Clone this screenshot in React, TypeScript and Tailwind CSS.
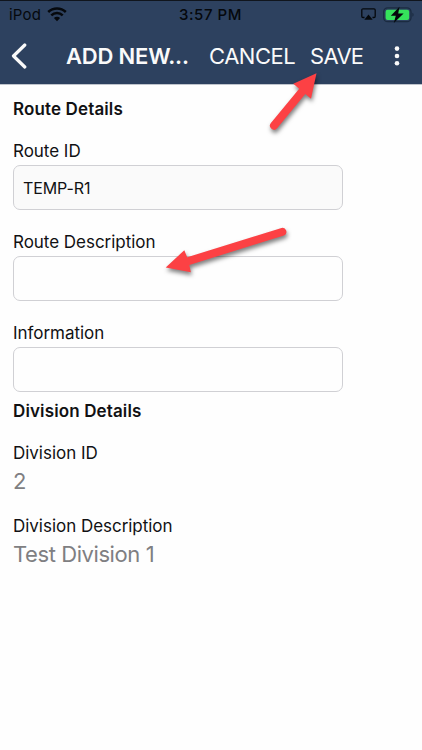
import type { ReactNode } from "react";

function WifiIcon() {
  return (
    <svg width="20" height="15" viewBox="0 0 20 15" fill="none" stroke="#05080c" strokeWidth="2.5">
      <path d="M1.200 5a12.600 12.600 0 0 1 17.600 0" />
      <path d="M4.300 8.400a8.100 8.100 0 0 1 11.400 0" />
      <path d="M10 14.200 6.900 11.100a4.400 4.400 0 0 1 6.200 0Z" fill="#05080c" stroke="none" />
    </svg>
  );
}

function AirplayIcon() {
  return (
    <svg width="15" height="13" viewBox="0 0 15 13" fill="none">
      <path d="M3.500 9.500H2A1.200 1.200 0 0 1 .8 8.300V2A1.200 1.200 0 0 1 2 .8h11A1.200 1.200 0 0 1 14.200 2v6.300A1.200 1.200 0 0 1 13 9.500h-1.500" stroke="#05080c" strokeWidth="1.300" />
      <path d="M7.500 6.500 11.700 11.800H3.300Z" fill="#05080c" />
    </svg>
  );
}

function BatteryIcon() {
  return (
    <svg width="32" height="18" viewBox="0 0 32 18" fill="none">
      <rect x=".7" y="1.900" width="27.300" height="13.800" rx="4" stroke="#1b2b40" strokeWidth="1.300" />
      <rect x="2.600" y="3.700" width="23.600" height="10.200" rx="2" fill="#35e35b" />
      <path d="M29.400 6.800c1.600.6 1.600 3.400 0 4Z" fill="#1b2b40" />
      <path d="M16.500.7 7.800 9.700h5l-2 7.200 9.800-9.500h-5.400Z" fill="#05080c" />
    </svg>
  );
}

function StatusBar() {
  return (
    <div className="flex h-7 items-center border-t border-[#10151d] pl-[9px] pr-[7px] text-[15px] leading-none text-[#05080c]">
      <div className="flex w-[170px] items-center gap-[6px]">
        <span className="tracking-[0.2px]">iPod</span>
        <WifiIcon />
      </div>
      <span className="font-medium tracking-[0.55px]">3:57 PM</span>
      <div className="ml-auto flex items-center gap-[7px]">
        <AirplayIcon />
        <BatteryIcon />
      </div>
    </div>
  );
}

function Toolbar() {
  return (
    <div className="flex h-14 items-center text-[22px] leading-none text-[#fafafa]">
      <button className="w-[66px] pl-[11px]" aria-label="Back">
        <svg width="17" height="26" viewBox="0 0 17 26" fill="none" stroke="currentColor" strokeWidth="3.200" strokeLinecap="round" strokeLinejoin="round">
          <path d="M13.800 2 2.500 13l11.300 11" />
        </svg>
      </button>
      <h1 className="w-[143px] whitespace-nowrap font-semibold tracking-[-0.2px]">ADD NEW...</h1>
      <button className="w-[101px] text-left tracking-[-0.5px]">CANCEL</button>
      <button className="w-[84px] text-left tracking-[-0.7px]">SAVE</button>
      <button aria-label="More">
        <svg width="6" height="20" viewBox="0 0 6 20" fill="currentColor">
          <circle cx="3" cy="2.600" r="2.300" />
          <circle cx="3" cy="10" r="2.300" />
          <circle cx="3" cy="17.200" r="2.300" />
        </svg>
      </button>
    </div>
  );
}

function SectionTitle({ children }: { children: ReactNode }) {
  return <h2 className="mb-5 h-[22px] text-[17px] font-semibold leading-[22px] tracking-[0.13px]">{children}</h2>;
}

function Label({ children }: { children: ReactNode }) {
  return <div className="h-[22px] text-[17px] leading-[22px] tracking-[-0.03px]">{children}</div>;
}

function Field({ label, value = "", readOnly = false }: { label: string; value?: string; readOnly?: boolean }) {
  return (
    <div className="mb-[21px]">
      <Label>{label}</Label>
      <input
        defaultValue={value}
        readOnly={readOnly}
        aria-label={label}
        className={
          "mt-[3px] block h-[45px] w-[330px] rounded-[7px] border border-[#d0d0d4] px-[9px] text-[16px] tracking-[-0.1px] outline-none " +
          (readOnly ? "bg-[#fafafa]" : "bg-[#fefefe]")
        }
      />
    </div>
  );
}

function ReadOnlyValue({ label, value }: { label: string; value: string }) {
  return (
    <div className="mb-[17px]">
      <Label>{label}</Label>
      <div className="h-[34px] text-[22px] leading-[34px] tracking-[-0.42px] text-[#7f7f82]">{value}</div>
    </div>
  );
}

// Callout arrows pointing at SAVE and the description field
function Arrows() {
  return (
    <svg className="pointer-events-none absolute inset-0" width="422" height="750" viewBox="0 0 422 750" fill="#fc4144">
      <g className="drop-shadow-[1px_3px_2px_rgba(0,0,0,0.5)]">
        <path d="M316.500 73.300 311 98.700 305.300 94 277.100 128.200A4 4 0 0 1 270.900 123.100L299.200 88.800 293.300 83.800Z" />
        <path d="M165.700 267.400 184.300 250.200 187.200 257.200 281.500 227.900A4 4 0 0 1 283.900 235.500L189.300 265 190.900 272.200Z" />
      </g>
    </svg>
  );
}

export default function App() {
  return (
    <div className="relative h-[750px] w-[422px] overflow-hidden bg-[#fefefe] font-['Inter',sans-serif] text-[#111113]">
      <header className="h-[85px] border-b border-[#bfc4cc] bg-[#2d415f]">
        <StatusBar />
        <Toolbar />
      </header>
      <main className="px-[13px] pt-[13px]">
        <SectionTitle>Route Details</SectionTitle>
        <Field label="Route ID" value="TEMP-R1" readOnly />
        <Field label="Route Description" />
        <Field label="Information" />
        <div className="-mt-[13px]">
          <SectionTitle>Division Details</SectionTitle>
        </div>
        <ReadOnlyValue label="Division ID" value="2" />
        <ReadOnlyValue label="Division Description" value="Test Division 1" />
      </main>
      <Arrows />
    </div>
  );
}
